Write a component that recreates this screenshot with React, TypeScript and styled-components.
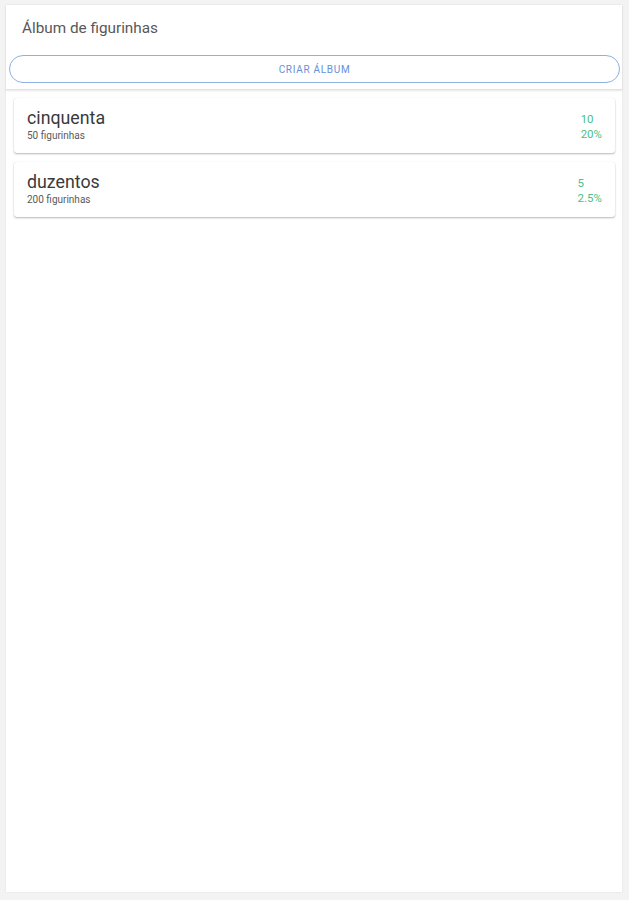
import styled, { createGlobalStyle } from 'styled-components';

const GlobalStyle = createGlobalStyle`
  html, body {
    margin: 0;
    padding: 0;
    background: #f3f3f3;
    font-family: Roboto, "Liberation Sans", sans-serif;
  }
`;

interface Album {
  name: string;
  total: number;
  owned: number;
}

const ALBUMS: Album[] = [
  { name: 'cinquenta', total: 50, owned: 10 },
  { name: 'duzentos', total: 200, owned: 5 },
];

function percent(a: Album): string {
  return `${Math.round((a.owned / a.total) * 1000) / 10}%`;
}

export default function App() {
  return (
    <>
      <GlobalStyle />
      <Page>
        <Panel>
          <Header>
            <Title>Álbum de figurinhas</Title>
            <CreateButton>CRIAR ÁLBUM</CreateButton>
          </Header>
          <List>
            {ALBUMS.map(a => (
              <Card key={a.name}>
                <Info>
                  <AlbumName>{a.name}</AlbumName>
                  <AlbumCount>{a.total} figurinhas</AlbumCount>
                </Info>
                <Stats>
                  <span>{a.owned}</span>
                  <span>{percent(a)}</span>
                </Stats>
              </Card>
            ))}
          </List>
        </Panel>
      </Page>
    </>
  );
}

// ─── Styles ──────────────────────────────────────────────────────────────

const Page = styled.div`
  width: 629px;
  height: 900px;
  padding: 5px 7px 8px 6px;
  box-sizing: border-box;
`;

const Panel = styled.div`
  background: #ffffff;
  height: 100%;
  display: flex;
  flex-direction: column;
  box-shadow: 0 0 2px rgba(0, 0, 0, 0.08);
`;

const Header = styled.header`
  display: flex;
  flex-direction: column;
  padding: 14px 2px 6px 3px;
  border-bottom: 1px solid #e2e2e2;
  box-shadow: 0 1px 2px rgba(0, 0, 0, 0.1);
  position: relative;
  z-index: 1;
`;

const Title = styled.h1`
  margin: 0 0 0 13px;
  font-size: 15.3px;
  font-weight: 400;
  color: #585858;
  line-height: 18px;
`;

const CreateButton = styled.button`
  margin-top: 18px;
  height: 28px;
  border: 1.5px solid #8fb0e4;
  border-radius: 14px;
  background: #ffffff;
  color: #6690d6;
  font-family: Roboto, "Liberation Sans", sans-serif;
  font-size: 10px;
  letter-spacing: 0.07em;
  cursor: pointer;
`;

const List = styled.div`
  display: flex;
  flex-direction: column;
  gap: 9px;
  padding: 8px 7px 0 8px;
`;

const Card = styled.div`
  display: flex;
  align-items: center;
  justify-content: space-between;
  height: 55px;
  padding: 0 13px 0 13px;
  background: #ffffff;
  border-radius: 3px;
  box-shadow: 0 1px 2px rgba(0, 0, 0, 0.28), 0 0 1px rgba(0, 0, 0, 0.1);
`;

const Info = styled.div`
  display: flex;
  flex-direction: column;
`;

const AlbumName = styled.span`
  font-size: 17.8px;
  color: #3a3a3a;
  line-height: 20px;
`;

const AlbumCount = styled.span`
  font-size: 10px;
  color: #5a5a5a;
  line-height: 14px;
  margin-top: 1px;
`;

const Stats = styled.div`
  display: flex;
  flex-direction: column;
  font-size: 11.5px;
  line-height: 15px;
  color: #4cc088;
  padding-top: 2px;
`;
